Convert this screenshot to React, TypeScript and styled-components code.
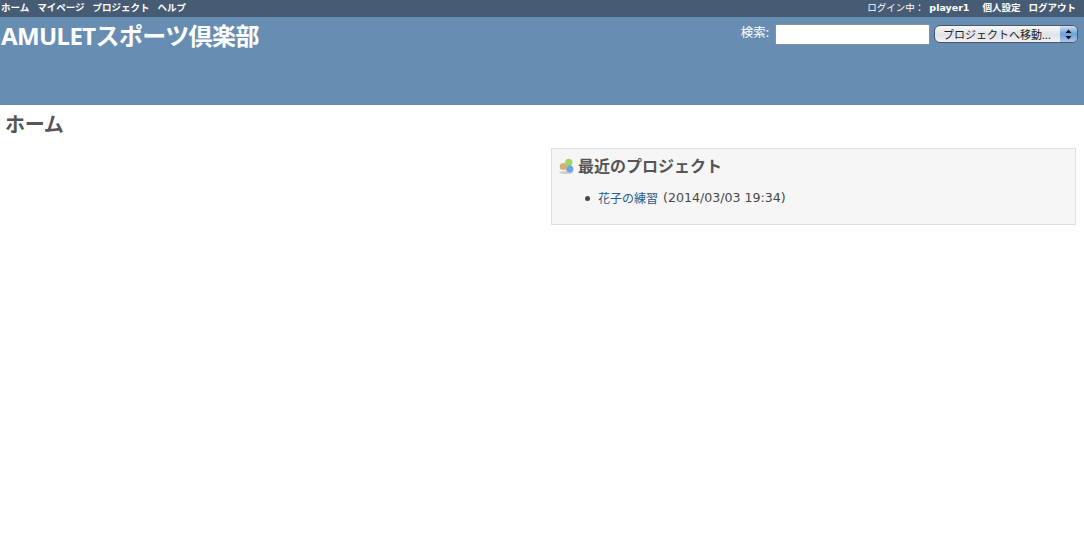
import styled, { createGlobalStyle } from 'styled-components'

const GlobalStyle = createGlobalStyle`
	html,
	body {
		margin: 0;
		padding: 0;
		background: #fff;
	}
	body {
		font-family: 'Noto Sans', 'Noto Sans CJK JP', 'DejaVu Sans', sans-serif;
		font-size: 12px;
		color: #484848;
	}
`

const Page = styled.div`
	width: 1084px;
	min-height: 546px;
	display: flex;
	flex-direction: column;
`
const TopMenu = styled.div`
	box-sizing: border-box;
	height: 17px;
	background: #465c74;
	display: flex;
	align-items: center;
	justify-content: space-between;
	padding: 0 8px 2px 1px;
	color: #fff;
	font-size: 9.5px;
	font-weight: 700;
	line-height: 13px;
`
const MenuGroup = styled.div`
	display: flex;
	align-items: center;
	gap: 8px;
`
const MenuRightGroup = styled(MenuGroup)`
	gap: 0;
`
const LoggedAs = styled.span`
	font-weight: 400;
	margin-right: 5px;
`
const UserName = styled.span`
	margin-right: 13px;
	font-family: 'DejaVu Sans', sans-serif;
`
const AccountLink = styled.span`
	margin-right: 8px;
	&:last-child {
		margin-right: 0;
	}
`
const Header = styled.div`
	height: 88px;
	background: #688db3;
	display: flex;
	justify-content: space-between;
	align-items: flex-start;
	color: #fff;
`
const Title = styled.h1`
	margin: 2px 0 0 1px;
	font-size: 24px;
	line-height: 33px;
	font-weight: 700;
	letter-spacing: -0.6px;
`
const QuickSearch = styled.div`
	display: flex;
	align-items: center;
	margin: 6px 6px 0 0;
`
const SearchLabel = styled.label`
	font-size: 12.5px;
	margin: 0 6px 2px 0;
	line-height: 20px;
`
const SearchInput = styled.input`
	box-sizing: border-box;
	width: 155px;
	height: 21px;
	margin: 0 4px 0 0;
	border: 1px solid #8d8f96;
	background: #fff;
	padding: 0 3px;
`
const JumpBox = styled.div`
	box-sizing: border-box;
	width: 144px;
	height: 18px;
	border: 1px solid #4a5568;
	border-radius: 6px;
	background: linear-gradient(#f8f8f8, #dfe3e8 55%, #f2f2f2);
	display: flex;
	align-items: center;
	justify-content: space-between;
	overflow: hidden;
	color: #222;
	font-size: 11px;
	padding-left: 8px;
`
const JumpArrows = styled.div`
	width: 17px;
	align-self: stretch;
	background: linear-gradient(#cfe0f3, #6d9fd8 50%, #a9c8ec);
	display: flex;
	align-items: center;
	justify-content: center;
`
const Main = styled.div`
	padding: 8px 8px 0 5px;
`
const PageTitle = styled.h2`
	margin: 0;
	font-size: 20px;
	line-height: 24px;
	font-weight: 700;
	color: #555;
	letter-spacing: -0.3px;
`
const Columns = styled.div`
	display: flex;
	justify-content: flex-end;
	margin-top: 11px;
`
const Box = styled.div`
	box-sizing: border-box;
	width: 525px;
	height: 77px;
	background: #f6f6f6;
	border: 1px solid #dfdfdf;
	padding: 6px 7px;
`
const BoxTitle = styled.h3`
	display: flex;
	align-items: center;
	gap: 3px;
	margin: 0;
	font-size: 16px;
	line-height: 22px;
	font-weight: 700;
	color: #555;
`
const ProjectList = styled.ul`
	margin: 13px 0 0;
	padding: 0 0 0 26px;
	list-style: none;
	font-size: 12.6px;
	line-height: 16px;
	font-family: 'DejaVu Sans', 'Noto Sans CJK JP', sans-serif;
`
const ProjectItem = styled.li`
	display: flex;
	align-items: center;
	gap: 5px;
	&::before {
		content: '';
		width: 5px;
		height: 5px;
		border-radius: 50%;
		background: #484848;
		margin-right: 3px;
	}
`
const ProjectLink = styled.a`
	color: #2a5a8a;
	font-size: 12px;
	font-family: 'Noto Sans CJK JP', sans-serif;
`

function ProjectsIcon() {
	return (
		<svg width="16" height="18" viewBox="0 0 16 18">
			<ellipse cx="7" cy="15.5" rx="7" ry="1.5" fill="#ccc" />
			<circle cx="4.3" cy="9.5" r="3.6" fill="#d9ac72" />
			<circle cx="9.8" cy="5.5" r="3.7" fill="#a7d267" />
			<circle cx="10.8" cy="12" r="3.6" fill="#6aa5de" />
		</svg>
	)
}

export default function App() {
	return (
		<Page>
			<GlobalStyle />
			<TopMenu>
				<MenuGroup>
					<span>ホーム</span>
					<span>マイページ</span>
					<span>プロジェクト</span>
					<span>ヘルプ</span>
				</MenuGroup>
				<MenuRightGroup>
					<LoggedAs>ログイン中：</LoggedAs>
					<UserName>player1</UserName>
					<AccountLink>個人設定</AccountLink>
					<AccountLink>ログアウト</AccountLink>
				</MenuRightGroup>
			</TopMenu>
			<Header>
				<Title>AMULETスポーツ倶楽部</Title>
				<QuickSearch>
					<SearchLabel>検索:</SearchLabel>
					<SearchInput />
					<JumpBox>
						プロジェクトへ移動...
						<JumpArrows>
							<svg width="7" height="11" viewBox="0 0 7 11">
								<path d="M3.5 0.5 L6.5 4 H0.5 Z M3.5 10.5 L0.5 7 H6.5 Z" fill="#111" />
							</svg>
						</JumpArrows>
					</JumpBox>
				</QuickSearch>
			</Header>
			<Main>
				<PageTitle>ホーム</PageTitle>
				<Columns>
					<Box>
						<BoxTitle>
							<ProjectsIcon />
							最近のプロジェクト
						</BoxTitle>
						<ProjectList>
							<ProjectItem>
								<ProjectLink>花子の練習</ProjectLink> (2014/03/03 19:34)
							</ProjectItem>
						</ProjectList>
					</Box>
				</Columns>
			</Main>
		</Page>
	)
}
